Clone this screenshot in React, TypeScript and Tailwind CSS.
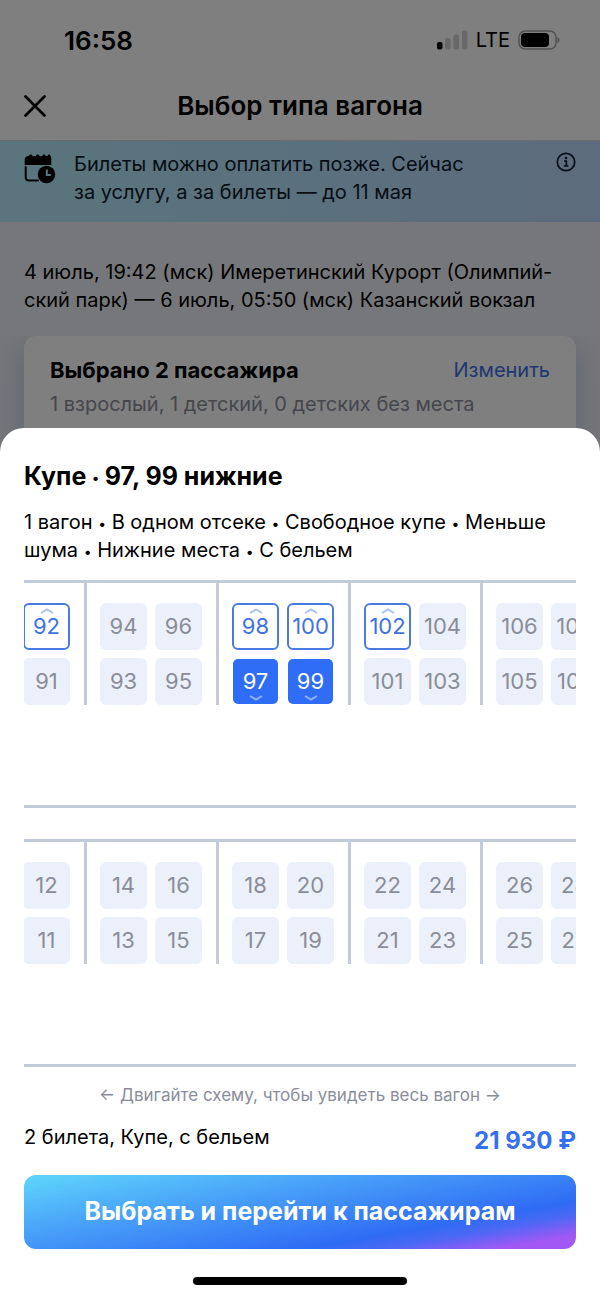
import clsx from "clsx";

type SeatState = "free" | "taken" | "selected";

interface Seat {
  number: number;
  state: SeatState;
}

// every column is one pair: upper berth, lower berth
interface Compartment {
  columns: [Seat, Seat][];
}

const free = (number: number): Seat => ({ number, state: "free" });
const taken = (number: number): Seat => ({ number, state: "taken" });
const selected = (number: number): Seat => ({ number, state: "selected" });

const upperDeck: Compartment[] = [
  { columns: [[free(92), taken(91)]] },
  {
    columns: [
      [taken(94), taken(93)],
      [taken(96), taken(95)],
    ],
  },
  {
    columns: [
      [free(98), selected(97)],
      [free(100), selected(99)],
    ],
  },
  {
    columns: [
      [free(102), taken(101)],
      [taken(104), taken(103)],
    ],
  },
  {
    columns: [
      [taken(106), taken(105)],
      [taken(108), taken(107)],
    ],
  },
];

const lowerDeck: Compartment[] = [
  { columns: [[taken(12), taken(11)]] },
  {
    columns: [
      [taken(14), taken(13)],
      [taken(16), taken(15)],
    ],
  },
  {
    columns: [
      [taken(18), taken(17)],
      [taken(20), taken(19)],
    ],
  },
  {
    columns: [
      [taken(22), taken(21)],
      [taken(24), taken(23)],
    ],
  },
  {
    columns: [
      [taken(26), taken(25)],
      [taken(28), taken(27)],
    ],
  },
];

function StatusBar() {
  return (
    <div className="flex h-20 items-center justify-between pr-10 pl-16">
      <span className="text-[26px] font-semibold">16:58</span>
      <div className="flex items-center gap-2">
        <svg width="31" height="20" viewBox="0 0 31 20">
          <rect x="0" y="12" width="5.500" height="7.500" rx="2" />
          <g fill="#d0d0d0">
            <rect x="8" y="8" width="5.500" height="11.500" rx="2" />
            <rect x="16.500" y="4.500" width="5.500" height="15" rx="2" />
            <rect x="25" y="0.500" width="5.500" height="19" rx="2" />
          </g>
        </svg>
        <span className="text-xl">LTE</span>
        <svg width="42" height="20" viewBox="0 0 42 20">
          <rect x="1" y="1" width="37" height="18" rx="6" fill="none" stroke="#a3a3a3" strokeWidth="1.5" />
          <rect x="3" y="3" width="28" height="14" rx="4" />
          <path d="M39.5 7v6c1.300-.5 2-1.700 2-3s-.7-2.500-2-3z" fill="#a3a3a3" />
        </svg>
      </div>
    </div>
  );
}

function CalendarClockIcon() {
  return (
    <svg width="32" height="32" viewBox="0 0 32 32" className="mt-1 shrink-0">
      <path d="M.7 11V5.500C.7 3.500 2 2.600 3.500 2.300L5 1.800 6.200.5h1.300L9 2.200h2.500L13 .5h1.300l1.500 1.700h2L19.300.5h1.300l1.500 1.700h1L24.500.5h1.200l.8 1.500c.6.5.8 1.200.8 2.200V11z" />
      <path d="M1.700 13v10c0 2.300 1.300 3.500 3.500 3.500H14" fill="none" stroke="#000" strokeWidth="2" strokeLinecap="round" />
      <circle cx="22.500" cy="20.500" r="8.700" />
      <path d="M22.800 15.500v5.500h4" fill="none" stroke="#b4ecff" strokeWidth="2" />
    </svg>
  );
}

function Dot() {
  return <span className="align-middle text-sm leading-none">•</span>;
}

function SeatButton({ seat }: { seat: Seat }) {
  const { number, state } = seat;
  return (
    <button
      type="button"
      disabled={state === "taken"}
      aria-pressed={state === "selected"}
      className={clsx(
        "relative flex size-[47px] shrink-0 items-center justify-center rounded-md text-[22px]",
        state === "free" && "border-2 border-[#4a7be0] bg-white text-[#3f72e0]",
        state === "taken" && "bg-[#ecf0fa] text-[#8a8d99]",
        state === "selected" && "border border-transparent bg-[#2f6df6] bg-clip-padding text-white"
      )}
    >
      {number}
      {state !== "taken" && (
        <svg
          width="14"
          height="6"
          viewBox="0 0 14 6"
          fill="none"
          stroke={state === "free" ? "#a9c3f5" : "#8fb2ff"}
          strokeWidth="2"
          className={clsx(
            "absolute left-1/2 -translate-x-1/2",
            state === "free" ? "top-[3px]" : "bottom-[3px] rotate-180"
          )}
        >
          <path d="M1 5l6-3.500L13 5" />
        </svg>
      )}
    </button>
  );
}

function Deck({ compartments }: { compartments: Compartment[] }) {
  return (
    <div className="overflow-hidden border-y-[3px] border-[#c3cbda] pb-[100px]">
      <div className="-ml-px flex">
        {compartments.map((compartment, i) => (
          <div
            key={i}
            className={clsx(
              "flex shrink-0 gap-2 pt-5 pr-[14px]",
              i > 0 && "border-l-[3px] border-[#c3cbda] pl-[13px]"
            )}
          >
            {compartment.columns.map(([upper, lower]) => (
              <div key={upper.number} className="flex flex-col gap-2">
                <SeatButton seat={upper} />
                <SeatButton seat={lower} />
              </div>
            ))}
          </div>
        ))}
      </div>
    </div>
  );
}

export default function App() {
  return (
    <div className="flex min-h-screen flex-col bg-white font-['Inter','Liberation_Sans',sans-serif] text-black">
      {/* Page under the sheet */}
      <div className="relative bg-[#edeef5]">
        <header className="border-b border-[#d8d8dc] bg-white">
          <StatusBar />
          <div className="grid h-15 grid-cols-[48px_1fr_48px] items-start px-6">
            <button type="button" aria-label="Закрыть" className="flex h-13 items-center">
              <svg width="22" height="22" viewBox="0 0 22 22" fill="none" stroke="#000" strokeWidth="2.700" strokeLinecap="round">
                <path d="M1.500 1.500l19 19M20.500 1.500l-19 19" />
              </svg>
            </button>
            <h1 className="text-center text-[26px] leading-[52px] font-semibold">Выбор типа вагона</h1>
          </div>
        </header>

        <div className="flex bg-linear-to-r from-[#b4ebfc] to-[#b9d7fb] px-6 pt-[9px] pb-4">
          <CalendarClockIcon />
          <p className="ml-[18px] flex-1 text-xl leading-7 text-[#0c1a2c]">
            Билеты можно оплатить позже. Сейчас
            <br />
            за услугу, а за билеты — до 11 мая
          </p>
          <button type="button" aria-label="Подробнее" className="flex h-6 items-center">
            <svg width="20" height="20" viewBox="0 0 20 20" fill="none" stroke="#0c1a2c" strokeWidth="1.700">
              <circle cx="10" cy="10" r="8.700" />
              <path d="M8 9h2.300v5M7.800 14h4.600" />
              <circle cx="10" cy="6" r="1.300" fill="#0c1a2c" stroke="none" />
            </svg>
          </button>
        </div>

        <div className="px-6 pt-9">
          <p className="text-xl leading-7">
            4 июль, 19:42 (мск) Имеретинский Курорт (Олимпий-
            <br />
            ский парк) — 6 июль, 05:50 (мск) Казанский вокзал
          </p>
        </div>
        <div className="mt-[22px] overflow-hidden px-6">
          <section className="rounded-xl bg-white px-[26px] pt-[18px] pb-[58px] shadow-[0_8px_32px_rgba(110,150,185,0.45)]">
            <div className="flex items-center justify-between">
              <h2 className="text-[22px] leading-8 font-bold">Выбрано 2 пассажира</h2>
              <a href="#passengers" className="text-xl leading-8 text-[#3f6fe0]">
                Изменить
              </a>
            </div>
            <p className="text-xl leading-9 text-[#8a8d99]">1 взрослый, 1 детский, 0 детских без места</p>
          </section>
        </div>
        <div className="absolute inset-0 bg-black/50" />
      </div>

      {/* Sheet */}
      <main className="relative -mt-13 flex-1 rounded-t-3xl bg-white px-6 pt-8">
        <h2 className="text-[25px] leading-8 font-bold">
          Купе <Dot /> 97, 99 нижние
        </h2>
        <p className="mt-4 text-xl leading-7">
          1 вагон <Dot /> В одном отсеке <Dot /> Свободное купе <Dot /> Меньше
          <br />
          шума <Dot /> Нижние места <Dot /> С бельем
        </p>

        <div className="mt-4 flex flex-col gap-[31px]">
          <Deck compartments={upperDeck} />
          <Deck compartments={lowerDeck} />
        </div>

        <p className="mt-4 text-center text-[17px] leading-6 text-[#8a8d99]">
          ← Двигайте схему, чтобы увидеть весь вагон →
        </p>
        <div className="mt-4 flex justify-between">
          <span className="text-xl leading-7">2 билета, Купе, с бельем</span>
          <span className="text-2xl leading-9 font-bold text-[#3470f0]">21 930 ₽</span>
        </div>
        <button
          type="button"
          className="mt-4 h-[74px] w-full rounded-xl bg-[linear-gradient(170deg,#5fd6fb_0%,#4aa5f9_32%,#2f6cf5_72%,#4b68f5_80%,#a258f5_92%)] text-[25px] font-bold text-white"
        >
          Выбрать и перейти к пассажирам
        </button>
        <div className="mx-auto mt-7 mb-3 h-2 w-[214px] rounded-full bg-black" />
      </main>
    </div>
  );
}
